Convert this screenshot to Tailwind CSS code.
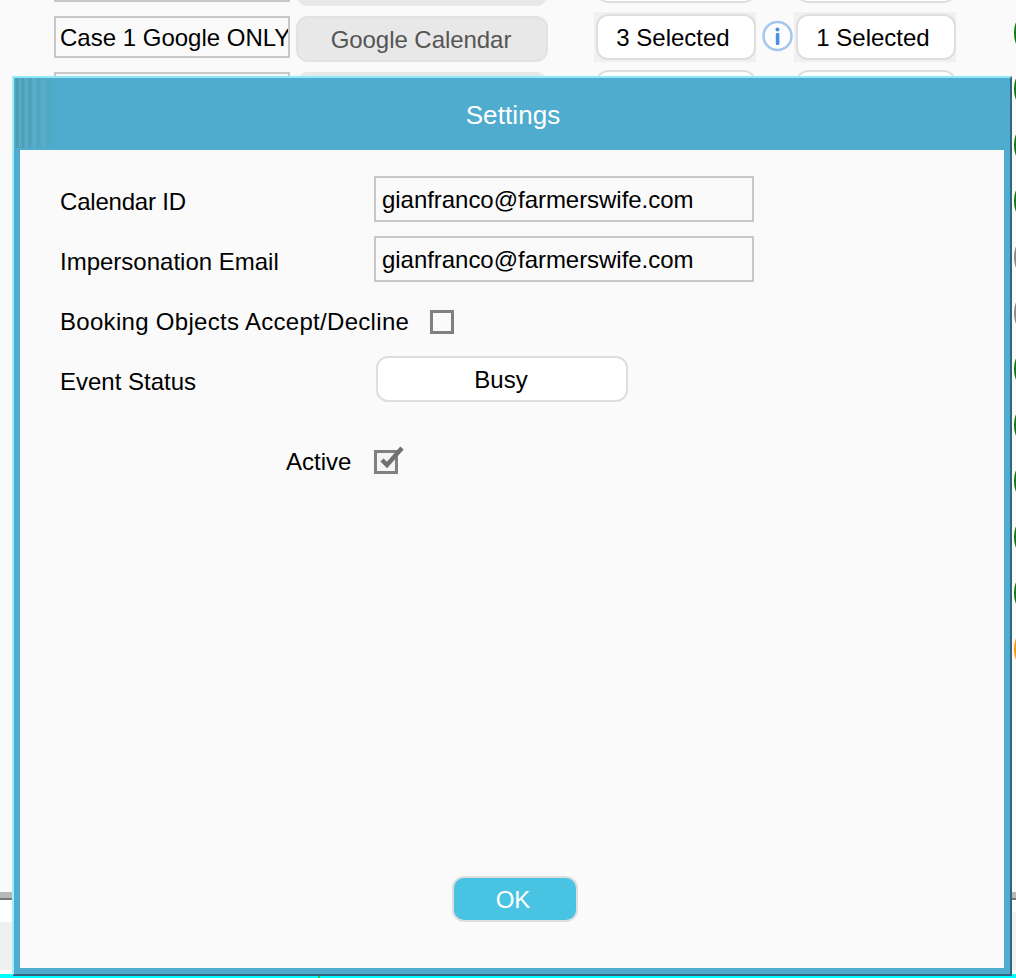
<!DOCTYPE html>
<html lang="en">
<head>
    <meta charset="UTF-8">
    <title>Settings</title>
    <script src="https://cdn.jsdelivr.net/npm/@tailwindcss/browser@4"></script>
</head>
<body class="relative w-[1016px] h-[978px] overflow-hidden bg-[#fafafa] font-['Liberation_Sans',Arial,sans-serif] text-[24px] text-black">
    <!-- rows behind the dialog -->
    <div class="absolute left-0 top-[-40px] w-full flex items-start">
        <div class="ml-[54px] w-[236px] h-[42px] border-2 border-[#c8c8c8]"></div>
        <div class="ml-[6px] w-[252px] h-[46px] rounded-[12px] bg-[#e8e8e8]"></div>
        <div class="ml-[48px] -mt-[3px] w-[160px] h-[46px] rounded-[12px] bg-white border-2 border-[#dedee2]"></div>
        <div class="ml-[40px] -mt-[3px] w-[160px] h-[46px] rounded-[12px] bg-white border-2 border-[#dedee2]"></div>
    </div>
    <div class="absolute left-0 top-[12px] w-full flex items-start">
        <div class="ml-[54px] mt-[4px] w-[236px] h-[42px] border-2 border-[#c8c8c8] pl-[4px] leading-[40px] whitespace-nowrap overflow-hidden">Case 1 Google ONLY</div>
        <div class="ml-[6px] mt-[4px] w-[252px] h-[46px] rounded-[12px] bg-[#e8e8e8] border-2 border-[#e2e2e2] pr-[2px] text-center leading-[44px] tracking-[-0.05px] text-[#555]">Google Calendar</div>
        <div class="ml-[46px] w-[162px] h-[50px] bg-[#f0f0f0] pl-[2px] pt-[2px]">
            <div class="w-[160px] h-[46px] rounded-[12px] bg-white border-2 border-[#dedee2] pr-[6px] text-center leading-[44px]">3 Selected</div>
        </div>
        <svg class="ml-[6px] mt-[8px] shrink-0" width="32" height="32" viewBox="0 0 32 32">
            <circle cx="15.5" cy="16" r="14" fill="#fdfdfd" stroke="#a3c6f0" stroke-width="2.5"/>
            <circle cx="15.5" cy="9.5" r="2" fill="#4a90e2"/>
            <rect x="13.8" y="13" width="3.6" height="12" rx="1" fill="#4a90e2"/>
        </svg>
        <div class="w-[162px] h-[50px] bg-[#f0f0f0] pl-[2px] pt-[2px]">
            <div class="w-[160px] h-[46px] rounded-[12px] bg-white border-2 border-[#dedee2] pr-[6px] text-center leading-[44px]">1 Selected</div>
        </div>
    </div>
    <div class="absolute left-0 top-[70px] w-full flex items-start">
        <div class="ml-[54px] mt-[2px] w-[236px] h-[42px] border-2 border-[#c8c8c8]"></div>
        <div class="ml-[6px] mt-[2px] w-[252px] h-[46px] rounded-[12px] bg-[#e8e8e8]"></div>
        <div class="ml-[48px] w-[160px] h-[46px] rounded-[12px] bg-white border-2 border-[#dedee2]"></div>
        <div class="ml-[40px] w-[160px] h-[46px] rounded-[12px] bg-white border-2 border-[#dedee2]"></div>
    </div>

    <!-- status dots, cut off by the window edge -->
    <div class="absolute left-[1014px] top-[21px] flex flex-col gap-[32px]">
        <div class="w-[8px] h-[24px] rounded-[50%] bg-[#0a7d0a]"></div>
        <div class="w-[8px] h-[24px] rounded-[50%] bg-[#0a7d0a]"></div>
        <div class="w-[8px] h-[24px] rounded-[50%] bg-[#0a7d0a]"></div>
        <div class="w-[8px] h-[24px] rounded-[50%] bg-[#0a7d0a]"></div>
        <div class="w-[8px] h-[24px] rounded-[50%] bg-[#8a8a8a]"></div>
        <div class="w-[8px] h-[24px] rounded-[50%] bg-[#8a8a8a]"></div>
        <div class="w-[8px] h-[24px] rounded-[50%] bg-[#0a7d0a]"></div>
        <div class="w-[8px] h-[24px] rounded-[50%] bg-[#0a7d0a]"></div>
        <div class="w-[8px] h-[24px] rounded-[50%] bg-[#0a7d0a]"></div>
        <div class="w-[8px] h-[24px] rounded-[50%] bg-[#0a7d0a]"></div>
        <div class="w-[8px] h-[24px] rounded-[50%] bg-[#0a7d0a]"></div>
        <div class="w-[8px] h-[24px] rounded-[50%] bg-[#f59a0c]"></div>
    </div>

    <!-- page footer behind the dialog -->
    <div class="absolute left-0 top-[892px] w-full">
        <div class="h-[6px] bg-[#b8b8b8]"></div>
        <div class="h-[2px] bg-[#777]"></div>
        <div class="h-[22px] bg-white"></div>
        <div class="h-[48px] bg-[#f0f0f0]"></div>
        <div class="h-[4px] bg-white"></div>
        <div class="h-[4px] bg-[#00ffff]"></div>
    </div>
    <div class="absolute right-0 top-[912px] w-[4px] h-[10px] bg-[#f0f0f0]"></div>
    <div class="absolute left-[318px] top-[976px] w-[2px] h-[2px] bg-[#22c55e]"></div>

    <!-- dialog -->
    <div class="absolute left-[12px] top-[76px] w-[1000px] h-[900px] flex flex-col bg-[#50acce] border-l-2 border-t-2 border-l-[#9df0f7] border-t-[#8feaf5] border-r-2 border-b-2 border-r-[#33667e] border-b-[#33667e]">
        <div class="relative h-[72px] shrink-0 flex items-center justify-center pt-[2px] pl-[2px] text-white text-[26px] tracking-[0.1px]">
            <div class="absolute left-0 top-0 w-[44px] h-[70px] bg-[linear-gradient(90deg,#5fb1c9_0px,#4a97b2_3px,#58aec8_6px,#4c9ab5_9px,#5ab0ca_12px,#4e9eb9_16px,#5ab0cb_20px,#4fa3bf_24px,#58aecb_29px,#50a8c6_34px,#50acce_44px)]"></div>
            <span class="relative">Settings</span>
        </div>
        <div class="relative flex-1 mx-[6px] mb-[6px] bg-[#fafafa]">
            <div class="flex flex-col pl-[40px] pt-[26px]">
                <div class="flex items-start h-[60px]">
                    <label class="w-[314px] pt-[8px] tracking-[-0.2px]">Calendar ID</label>
                    <div class="w-[380px] h-[46px] border-2 border-[#c8c8c8] pl-[6px] leading-[44px] tracking-[-0.04px]">gianfranco@farmerswife.com</div>
                </div>
                <div class="flex items-start h-[60px]">
                    <label class="w-[314px] pt-[8px]">Impersonation Email</label>
                    <div class="w-[380px] h-[46px] border-2 border-[#c8c8c8] pl-[6px] leading-[44px] tracking-[-0.04px]">gianfranco@farmerswife.com</div>
                </div>
                <div class="flex items-start h-[60px]">
                    <label class="pt-[8px] whitespace-nowrap tracking-[0.3px]">Booking Objects Accept/Decline</label>
                    <div class="ml-[21px] mt-[14px] size-[24px] border-[3px] border-[#808080]"></div>
                </div>
                <div class="flex items-start h-[60px]">
                    <label class="w-[316px] pt-[8px]">Event Status</label>
                    <div class="w-[252px] h-[46px] rounded-[12px] bg-white border-2 border-[#dedede] pr-[2px] text-center leading-[44px]">Busy</div>
                </div>
                <div class="flex items-start mt-[14px] ml-[226px]">
                    <label class="pt-[14px]">Active</label>
                    <svg class="ml-[23px] mt-[16px]" width="30" height="30" viewBox="0 0 30 30" fill="none">
                        <rect x="1.5" y="5.5" width="21" height="21" fill="#f4f4f4" stroke="#808080" stroke-width="3"/>
                        <path d="M8 14 L13 19 L28 2" stroke="#707070" stroke-width="4.5"/>
                    </svg>
                </div>
            </div>
            <button class="absolute left-[432px] top-[726px] w-[126px] h-[46px] rounded-[12px] bg-[#48c4e2] border-2 border-[#dedede] pr-[4px] pt-[2px] text-white text-[24px]">OK</button>
        </div>
    </div>
</body>
</html>
